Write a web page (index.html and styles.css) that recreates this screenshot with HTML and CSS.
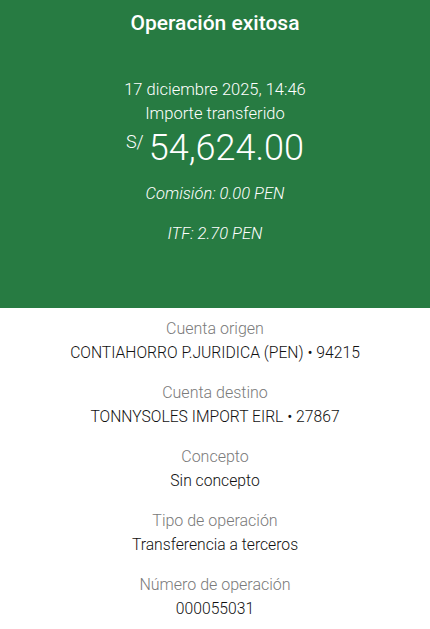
FILE: index.html
```html
<!DOCTYPE html>
<html lang="es">
<head>
  <meta charset="UTF-8" />
  <meta name="viewport" content="width=device-width, initial-scale=1" />
  <title>Operación exitosa</title>
  <link rel="stylesheet" href="styles.css">
</head>
<body>
  <div class="hero">
    <h1>Operación exitosa</h1>
    <div class="date">17 diciembre 2025, 14:46</div>
    <div class="caption">Importe transferido</div>
    <div class="amount"><span class="currency">S/</span>54,624.00</div>
    <div class="fee">Comisión: 0.00 PEN</div>
    <div class="fee">ITF: 2.70 PEN</div>
  </div>

  <div class="details">
    <div class="item">
      <div class="label">Cuenta origen</div>
      <div class="value">CONTIAHORRO P.JURIDICA (PEN) • 94215</div>
    </div>
    <div class="item">
      <div class="label">Cuenta destino</div>
      <div class="value">TONNYSOLES IMPORT EIRL • 27867</div>
    </div>
    <div class="item">
      <div class="label">Concepto</div>
      <div class="value">Sin concepto</div>
    </div>
    <div class="item">
      <div class="label">Tipo de operación</div>
      <div class="value">Transferencia a terceros</div>
    </div>
    <div class="item">
      <div class="label">Número de operación</div>
      <div class="value">000055031</div>
    </div>
  </div>
</body>
</html>
```

FILE: styles.css
```css
body {
  margin: 0;
  font-family: Roboto, "Liberation Sans", sans-serif;
  text-align: center;
  background: #fff;
}

.hero {
  background: #277b42;
  color: #fff;
  height: 308px;
  padding-top: 9px;
  box-sizing: border-box;
}

h1 {
  margin: 0;
  font-size: 21px;
  font-weight: 500;
  line-height: 28px;
}

.date {
  margin-top: 41px;
  font-size: 16.5px;
  font-weight: 300;
  line-height: 24px;
}

.caption {
  font-size: 16.5px;
  font-weight: 300;
  line-height: 24px;
}

.amount {
  margin-top: -6px;
  font-size: 36px;
  font-weight: 300;
  line-height: 44px;
}

.currency {
  font-size: 18px;
  vertical-align: 12px;
  margin-right: 5px;
}

.fee {
  font-size: 16.5px;
  font-weight: 300;
  font-style: italic;
  line-height: 24px;
  margin-top: 16px;
}

.amount + .fee {
  margin-top: 12px;
}

.details {
  padding-top: 9px;
}

.item {
  margin-bottom: 16px;
}

.label {
  color: #7a7a7a;
  font-size: 16px;
  font-weight: 300;
  line-height: 24px;
}

.value {
  color: #111;
  font-size: 15.7px;
  font-weight: 300;
  line-height: 24px;
}
```
